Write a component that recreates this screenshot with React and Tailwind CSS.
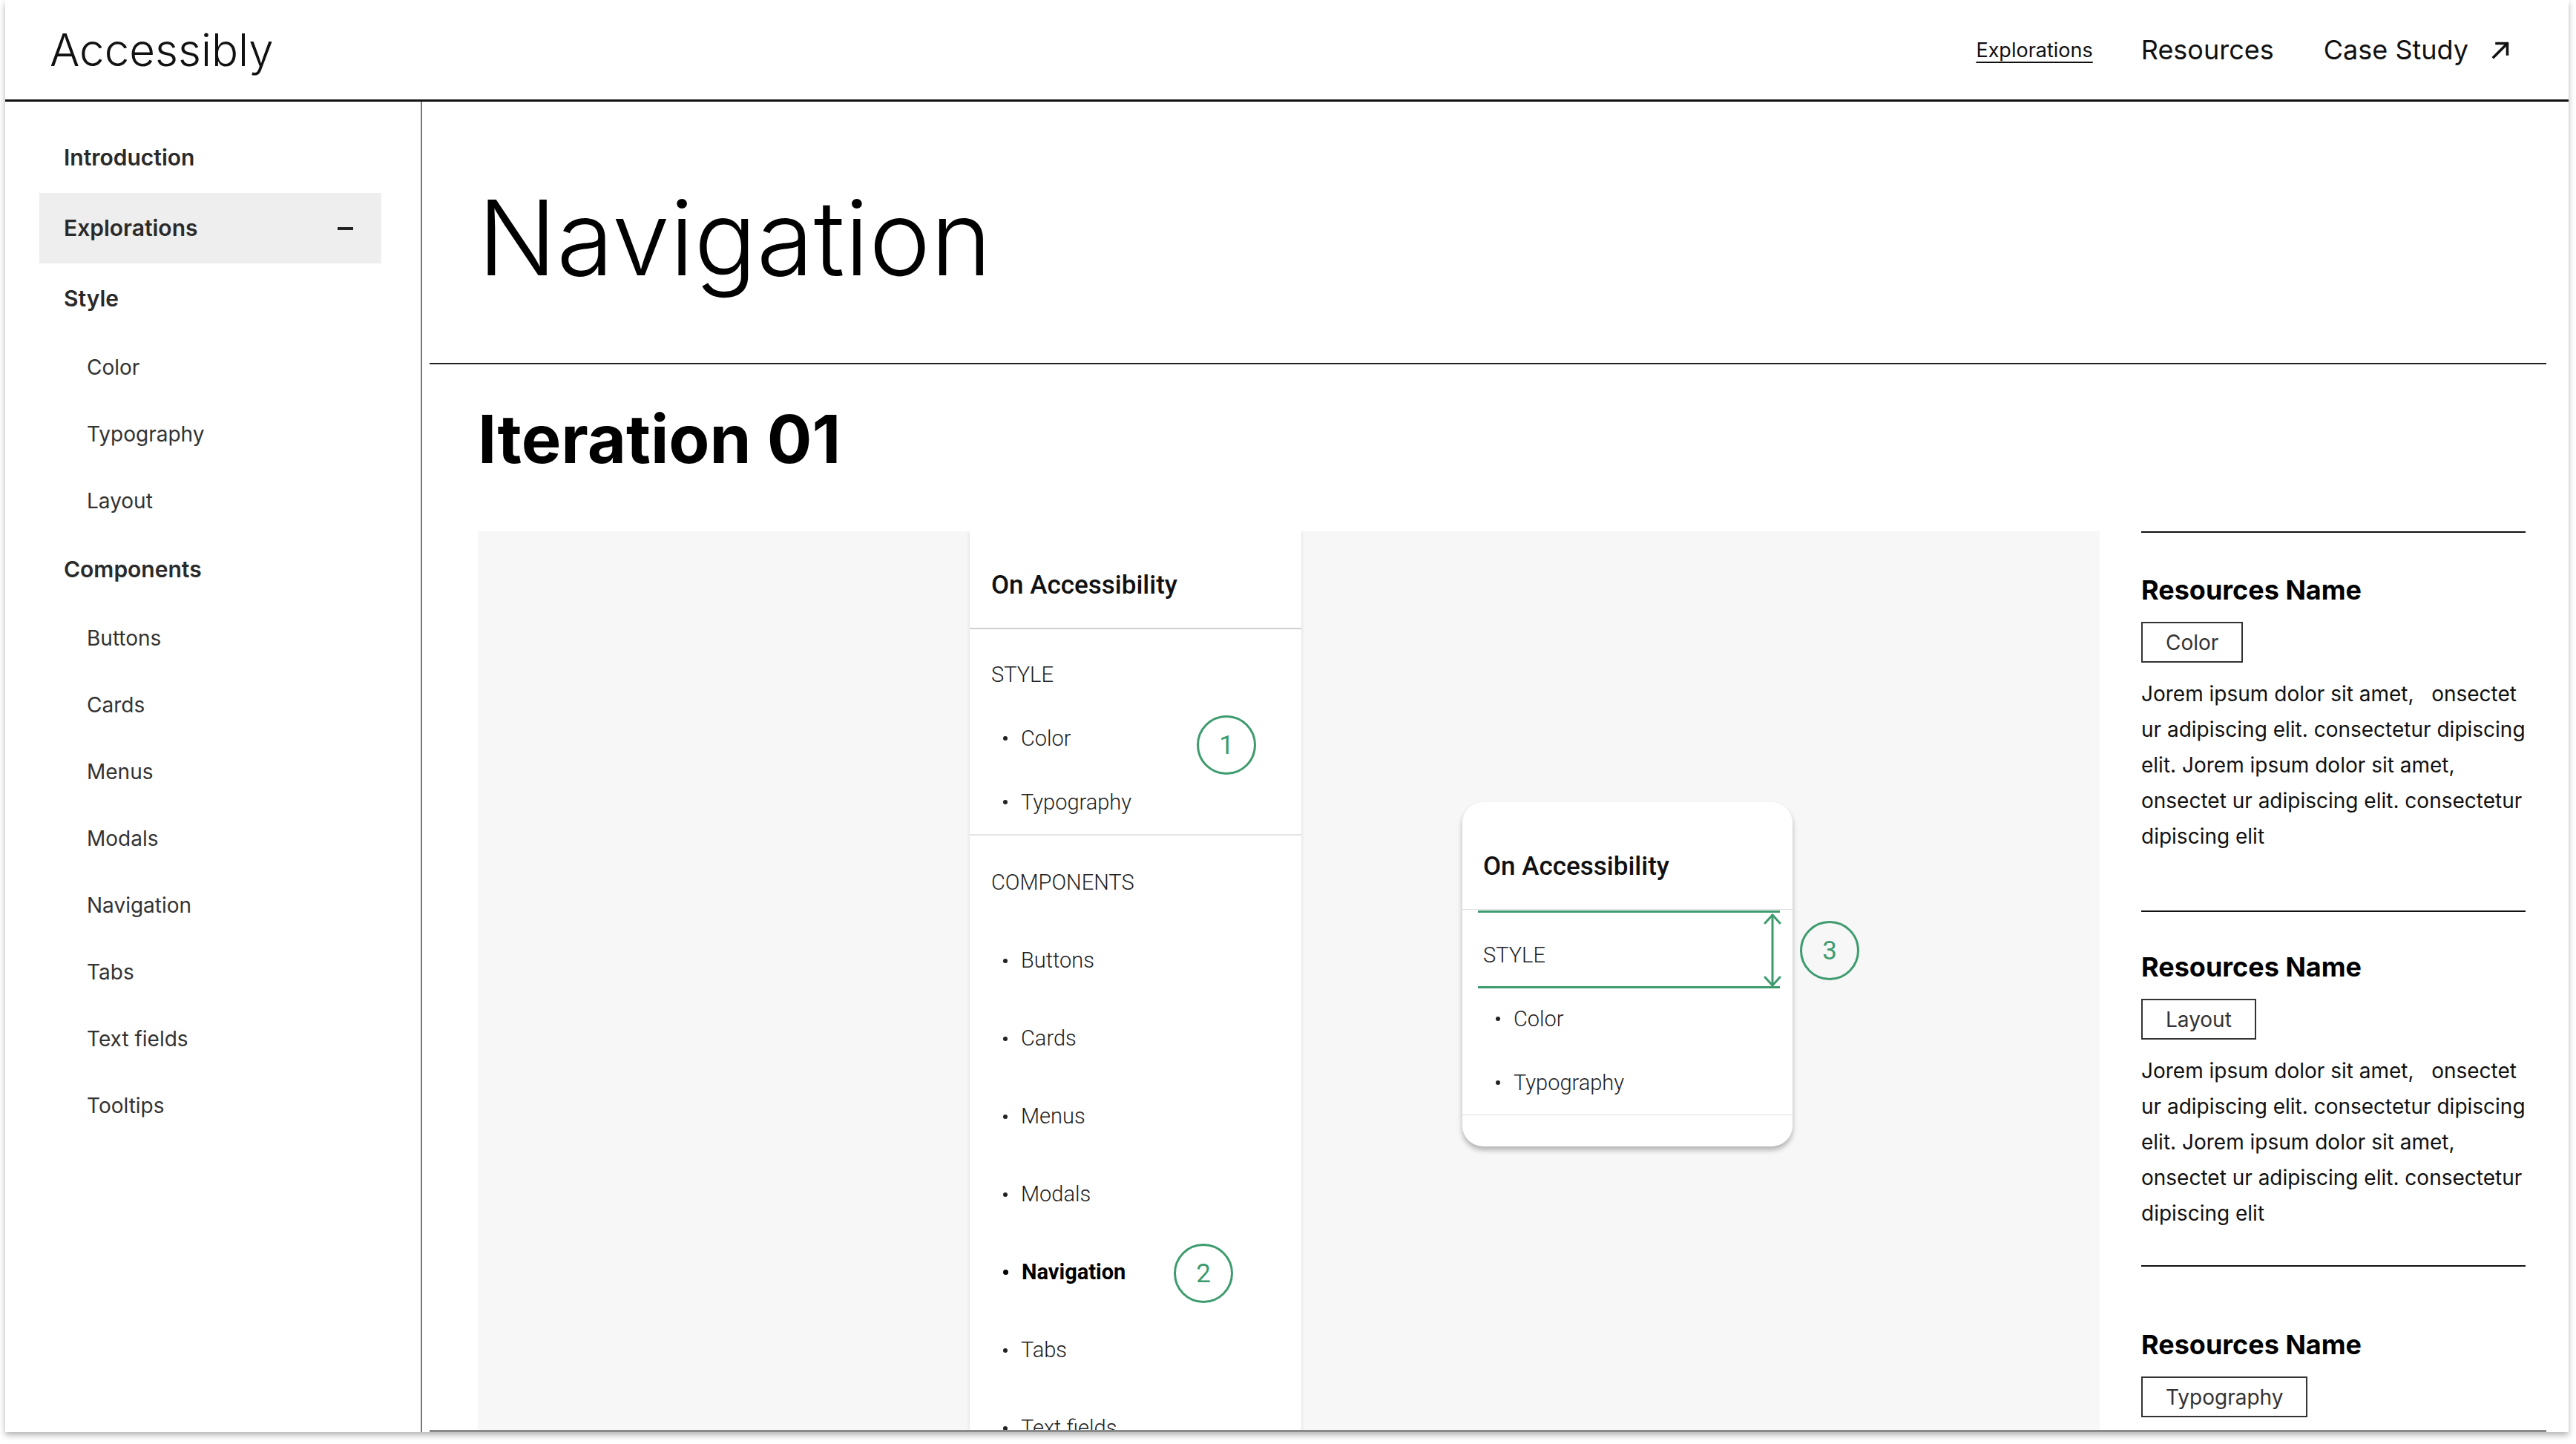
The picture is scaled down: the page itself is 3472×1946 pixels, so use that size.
import React from 'react';

const sideItems = [
    { label: 'Introduction', top: true },
    { label: 'Explorations', top: true, active: true },
    { label: 'Style', top: true },
    { label: 'Color' },
    { label: 'Typography' },
    { label: 'Layout' },
    { label: 'Components', top: true },
    { label: 'Buttons' },
    { label: 'Cards' },
    { label: 'Menus' },
    { label: 'Modals' },
    { label: 'Navigation' },
    { label: 'Tabs' },
    { label: 'Text fields' },
    { label: 'Tooltips' },
];

const components = ['Buttons', 'Cards', 'Menus', 'Modals', 'Navigation', 'Tabs', 'Text fields', 'Tooltips'];

const lorem = [
    'Jorem ipsum dolor sit amet,   onsectet',
    'ur adipiscing elit. consectetur dipiscing',
    'elit. Jorem ipsum dolor sit amet,',
    'onsectet ur adipiscing elit. consectetur',
    'dipiscing elit',
];

const SideRow = ({ item }) => {
    if (item.top) {
        return (
            <div className={`h-[95px] flex items-center justify-between pl-[33px] pr-[38px] text-[30px] font-semibold text-[#2a2a2a] ${item.active ? 'bg-[#eeeeee]' : ''}`}>
                <span>{item.label}</span>
                {item.active && <span className="block w-[21px] h-[4px] bg-[#222]" />}
            </div>
        );
    }
    return <div className="h-[90px] flex items-center pl-[64px] text-[28px] text-[#333]">{item.label}</div>;
};

const Bullet = ({ label, bold, tall }) => (
    <div className={`${tall ? 'h-[105px]' : 'h-[86px]'} flex items-center`}>
        <span className={`ml-[45px] block rounded-full ${bold ? 'w-[7px] h-[7px] bg-black' : 'w-[6px] h-[6px] bg-[#222]'}`} />
        <span className={`ml-[18px] text-[29px] leading-none ${bold ? 'font-bold text-black' : 'font-light text-[#222]'}`}>{label}</span>
    </div>
);

const Circle = ({ n, className }) => (
    <div className={`absolute w-[80px] h-[80px] rounded-full border-[3px] border-[#3d9b6e] flex items-center justify-center text-[#3d9b6e] text-[35px] leading-none ${className}`}>
        {n}
    </div>
);

const Resource = ({ tag, className }) => (
    <div className={className}>
        <div className="text-[36px] font-bold leading-none text-black">Resources Name</div>
        <div className="mt-[25px] inline-flex h-[55px] items-center border-2 border-[#333] px-[31px] text-[28px] text-[#333]">{tag}</div>
        <div className="mt-[18px] text-[28px] leading-[48px] text-[#111]">
            {lorem.map((line, i) => (
                <div key={i} className="whitespace-pre">{line}</div>
            ))}
        </div>
    </div>
);

export default function App() {
    return (
        <div className="w-[3472px] h-[1946px] bg-white font-['Inter',sans-serif]">
            <div className="ml-[7px] w-[3455px] h-[1930px] bg-white flex flex-col overflow-hidden shadow-[0_4px_8px_rgba(0,0,0,0.3)]">
                {/* top bar */}
                <header className="h-[137px] shrink-0 flex items-center justify-between pl-[60px] pr-[79px] border-b-[3px] border-[#111]">
                    <div className="text-[60px] font-light leading-none text-[#111]">Accessibly</div>
                    <nav className="flex items-center text-[#111]">
                        <a className="text-[27px] leading-none underline decoration-2 underline-offset-[6px]">Explorations</a>
                        <a className="ml-[65px] text-[36px] leading-none">Resources</a>
                        <a className="ml-[67px] text-[36px] leading-none">Case Study</a>
                        <svg className="ml-[31px]" width="25" height="25" viewBox="0 0 25 25" fill="none" stroke="#111" strokeWidth="3.5" strokeLinecap="square">
                            <path d="M3 22 L21 4" />
                            <path d="M7 3.5 H21.5 V18" />
                        </svg>
                    </nav>
                </header>

                <div className="flex flex-1 min-h-0">
                    {/* sidebar */}
                    <aside className="w-[562px] shrink-0 border-r-2 border-[#7a7a7a] pl-[46px] pr-[53px] pt-[28px]">
                        {sideItems.map(item => (
                            <SideRow key={item.label} item={item} />
                        ))}
                    </aside>

                    {/* main */}
                    <main className="flex-1 min-w-0 flex flex-col">
                        <h1 className="pl-[75px] pt-[113px] text-[140px] font-light leading-none text-black">Navigation</h1>
                        <div className="mt-[99px] ml-[10px] mr-[30px] h-[2px] bg-[#222]" />
                        <h2 className="pl-[75px] mt-[56px] text-[90px] font-bold leading-none text-black">Iteration 01</h2>

                        <div className="flex-1 min-h-0 overflow-hidden mt-[79px] pl-[75px] flex items-start">
                            {/* canvas */}
                            <div className="w-[2186px] h-[1400px] shrink-0 bg-[#f7f7f7] flex font-['Roboto',sans-serif]">
                                <div className="w-[663px] shrink-0" />
                                <div className="relative w-[447px] shrink-0 bg-white shadow-[0_0_5px_rgba(0,0,0,0.12)]">
                                    <div className="h-[132px] pl-[29px] pt-[55px] text-[35px] font-medium leading-none text-[#111] border-b-2 border-[#cfcfcf]">
                                        On Accessibility
                                    </div>
                                    <div className="pt-[18px] border-b-2 border-[#e3e3e3]">
                                        <div className="h-[86px] flex items-center pl-[29px] text-[29px] font-light leading-none text-[#222]">STYLE</div>
                                        <Bullet label="Color" />
                                        <Bullet label="Typography" />
                                    </div>
                                    <div className="pt-[11px]">
                                        <div className="h-[105px] flex items-center pl-[29px] text-[29px] font-light leading-none text-[#222]">COMPONENTS</div>
                                        {components.map(c => (
                                            <Bullet key={c} label={c} tall bold={c === 'Navigation'} />
                                        ))}
                                    </div>
                                    <Circle n="1" className="left-[306px] top-[248px]" />
                                    <Circle n="2" className="left-[275px] top-[960px]" />
                                </div>
                                <div className="flex-1">
                                    <div className="relative ml-[217px] mt-[365px] w-[445px] rounded-[28px] bg-white shadow-[0_5px_7px_rgba(0,0,0,0.28)]">
                                        <div className="h-[145px] pl-[28px] pt-[69px] text-[35px] font-medium leading-none text-[#111] border-b border-[#dddddd]">
                                            On Accessibility
                                        </div>
                                        <div className="pt-[18px] border-b border-[#dddddd]">
                                            <div className="h-[86px] flex items-center pl-[28px] text-[29px] font-light leading-none text-[#222]">STYLE</div>
                                            <Bullet label="Color" />
                                            <Bullet label="Typography" />
                                        </div>
                                        <div className="h-[42px]" />
                                        <div className="absolute left-[21px] top-[146px] w-[407px] h-[3px] bg-[#3d9b6e]" />
                                        <div className="absolute left-[21px] top-[248px] w-[407px] h-[3px] bg-[#3d9b6e]" />
                                        <svg className="absolute left-[406px] top-[150px]" width="24" height="99" viewBox="0 0 24 99" fill="none" stroke="#3d9b6e" strokeWidth="3" strokeLinecap="round" strokeLinejoin="round">
                                            <path d="M12 2 V97" />
                                            <path d="M2 13 L12 2 L22 13" />
                                            <path d="M2 86 L12 97 L22 86" />
                                        </svg>
                                        <Circle n="3" className="left-[455px] top-[160px]" />
                                    </div>
                                </div>
                            </div>

                            {/* resources */}
                            <div className="w-[518px] shrink-0 ml-[56px]">
                                <div className="h-[2px] bg-[#111]" />
                                <Resource tag="Color" className="pt-[59px] pb-[76px]" />
                                <div className="h-[2px] bg-[#111]" />
                                <Resource tag="Layout" className="pt-[56px] pb-[46px]" />
                                <div className="h-[2px] bg-[#111]" />
                                <Resource tag="Typography" className="pt-[87px]" />
                            </div>
                        </div>
                        <div className="h-[3px] shrink-0 ml-[10px] mr-[30px] bg-[#8a8a8a]" />
                    </main>
                </div>
            </div>
        </div>
    );
}
